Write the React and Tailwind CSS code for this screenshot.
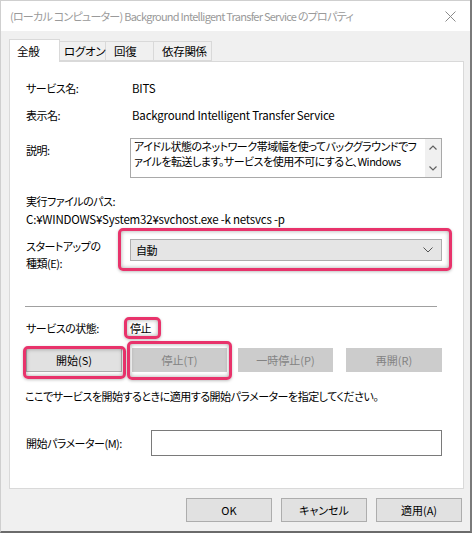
import React from 'react';

const font = "font-['Noto_Sans_CJK_JP',sans-serif] [font-feature-settings:'palt']";

// pink annotation ring drawn over the controls
function Mark({ className }) {
    return (
        <div
            className={`absolute rounded-[5px] border-[3px] border-[#e8336b] shadow-[inset_0_0_4px_rgba(0,0,0,0.35),0_1px_3px_rgba(0,0,0,0.25)] pointer-events-none ${className}`}
        />
    );
}

function Btn({ children, disabled = false, className = '' }) {
    return (
        <div
            className={`h-[24px] flex items-center justify-center border text-[11px] ${
                disabled
                    ? 'bg-[#cccccc] border-[#cccccc] text-[#838383]'
                    : 'bg-[#e1e1e1] border-[#adadad] text-black'
            } ${className}`}
        >
            {children}
        </div>
    );
}

export default function App() {
    return (
        <div className={`w-[472px] h-[533px] flex flex-col bg-[#f0f0f0] border-l border-r-2 border-b-2 border-l-[#cfcfcf] border-r-[#7a7a7a] border-b-[#6b6b6b] overflow-hidden ${font}`}>
            {/* title bar */}
            <div className="h-[31px] shrink-0 bg-white flex items-center pl-[9px] pr-[10px] border-t border-[#cfcfcf]">
                <div className="flex-1 text-[11px] tracking-[-0.75px] text-[#9a9a9a] leading-none whitespace-nowrap">
                    (ローカル コンピューター) Background Intelligent Transfer Service のプロパティ
                </div>
                <svg width="11" height="11" viewBox="0 0 11 11" className="mr-[4px]">
                    <path d="M0.5 0.5 L10.5 10.5 M10.5 0.5 L0.5 10.5" stroke="#8a8a8a" strokeWidth="1" />
                </svg>
            </div>

            <div className="flex-1 flex flex-col px-[8px] pt-[8px]">
                {/* tabs */}
                <div className="flex items-end h-[22px] text-[11.5px] tracking-[-0.3px] relative z-10 whitespace-nowrap">
                    <div className="w-[51px] h-[23px] -mb-px bg-white border border-b-0 border-[#d9d9d9] pl-[7px] pt-[3px]">全般</div>
                    <div className="w-[46px] h-[20px] border border-l-0 border-[#d9d9d9] pl-[4px] pt-[1px]">ログオン</div>
                    <div className="w-[48px] h-[20px] border border-l-0 border-[#d9d9d9] pl-[8px] pt-[1px]">回復</div>
                    <div className="w-[58px] h-[20px] border border-l-0 border-[#d9d9d9] pl-[8px] pt-[1px]">依存関係</div>
                </div>

                {/* panel */}
                <div className="w-[455px] h-[428px] bg-white border border-[#d9d9d9] relative text-[11px] tracking-[-0.5px] text-black leading-[16px] whitespace-nowrap">
                    <div className="flex mt-[18px] pl-[16px] h-[16px]">
                        <div className="w-[106px]">サービス名:</div>
                        <div className="text-[11.5px] tracking-[-0.2px]">BITS</div>
                    </div>
                    <div className="flex mt-[11px] pl-[16px] h-[16px]">
                        <div className="w-[106px]">表示名:</div>
                        <div className="text-[11.5px] tracking-[-0.2px]">Background Intelligent Transfer Service</div>
                    </div>
                    <div className="flex mt-[15px] pl-[16px] h-[40px]">
                        <div className="w-[104px] pt-[4px]">説明:</div>
                        <div className="w-[312px] h-[40px] border border-[#a9a9a9] flex">
                            <div className="flex-1 pl-[3px] leading-[15px] overflow-hidden">
                                <div>アイドル状態のネットワーク帯域幅を使ってバックグラウンドでフ</div>
                                <div>ァイルを転送します。サービスを使用不可にすると、Windows</div>
                            </div>
                            <div className="w-[16px] bg-[#f0f0f0] flex flex-col items-center justify-between py-[6px]">
                                <svg width="8" height="5" viewBox="0 0 8 5">
                                    <path d="M0.5 4.5 L4 1 L7.5 4.5" stroke="#606060" strokeWidth="1.2" fill="none" />
                                </svg>
                                <svg width="8" height="5" viewBox="0 0 8 5">
                                    <path d="M0.5 0.5 L4 4 L7.5 0.5" stroke="#606060" strokeWidth="1.2" fill="none" />
                                </svg>
                            </div>
                        </div>
                    </div>
                    <div className="mt-[15px] pl-[16px] h-[16px]">実行ファイルのパス:</div>
                    <div className="mt-[2px] pl-[16px] h-[16px] text-[11.5px] tracking-[-0.2px]">C:¥WINDOWS¥System32¥svchost.exe -k netsvcs -p</div>
                    <div className="flex mt-[12px] pl-[16px]">
                        <div className="w-[104px] -mt-[1px] leading-[17px] h-[33px]">
                            スタートアップの
                            <br />
                            種類(E):
                        </div>
                        <div className="w-[312px] h-[22px] bg-[#e5e5e5] border border-[#adadad] flex items-center pl-[5px] pr-[8px]">
                            <span className="flex-1">自動</span>
                            <svg width="10" height="6" viewBox="0 0 10 6">
                                <path d="M0.5 0.5 L5 5 L9.5 0.5" stroke="#555" strokeWidth="1" fill="none" />
                            </svg>
                        </div>
                    </div>
                    <div className="mt-[35px] ml-[15px] w-[412px] h-px bg-[#a0a0a0]" />
                    <div className="flex mt-[13px] pl-[16px] h-[16px]">
                        <div className="w-[104px]">サービスの状態:</div>
                        <div>停止</div>
                    </div>
                    <div className="flex mt-[12px] pl-[16px] gap-[10px] tracking-normal">
                        <Btn className="w-[96px]">開始(S)</Btn>
                        <Btn disabled className="w-[95px]">停止(T)</Btn>
                        <Btn disabled className="w-[95px] ml-[1px]">一時停止(P)</Btn>
                        <Btn disabled className="w-[96px] ml-[3px]">再開(R)</Btn>
                    </div>
                    <div className="mt-[16px] pl-[15px] h-[16px]">ここでサービスを開始するときに適用する開始パラメーターを指定してください。</div>
                    <div className="flex items-center mt-[26px] pl-[16px]">
                        <div className="w-[125px]">開始パラメーター(M):</div>
                        <div className="w-[291px] h-[26px] border border-[#7a7a7a] bg-white" />
                    </div>

                    {/* annotations */}
                    <Mark className="left-[108px] top-[166px] w-[334px] h-[43px]" />
                    <Mark className="left-[114px] top-[255px] w-[37px] h-[22px]" />
                    <Mark className="left-[13px] top-[284px] w-[103px] h-[33px]" />
                    <Mark className="left-[117px] top-[279px] w-[105px] h-[39px]" />
                </div>

                {/* dialog buttons */}
                <div className="flex justify-end gap-[9px] mt-[9px]">
                    <Btn className="w-[86px]">OK</Btn>
                    <Btn className="w-[86px]">キャンセル</Btn>
                    <Btn className="w-[86px]">適用(A)</Btn>
                </div>
            </div>
        </div>
    );
}
